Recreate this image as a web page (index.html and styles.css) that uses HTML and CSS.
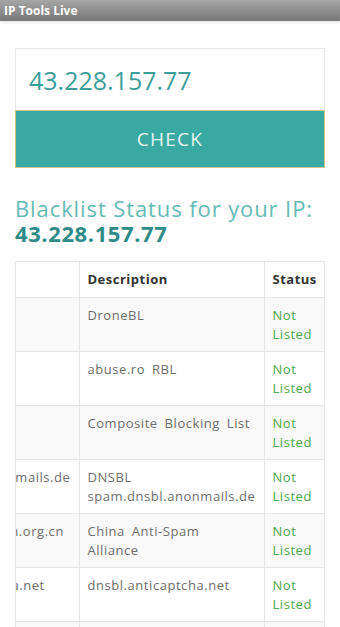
FILE: index.html
```html
<!DOCTYPE html>
<html lang="en">

<head>
  <meta charset="UTF-8" />
  <meta name="viewport" content="width=device-width, initial-scale=1.0" />
  <title>IP Tools Live</title>
  <link rel="stylesheet" href="styles.css">
</head>

<body>

  <div class="titlebar">IP Tools Live</div>

  <div class="page">
    <!-- IP check form -->
    <form class="check-form" onsubmit="return false">
      <input type="text" class="ip-input" value="43.228.157.77" />
      <button class="check-btn">CHECK</button>
    </form>

    <h2 class="result-title">Blacklist Status for your IP:<br><strong>43.228.157.77</strong></h2>

    <!-- Results table, scrolled to the right like on the phone -->
    <div class="table-wrap">
      <table class="bl-table">
        <colgroup>
          <col class="col-host">
          <col class="col-desc">
          <col class="col-status">
        </colgroup>
        <thead>
          <tr>
            <th>Blacklist</th>
            <th>Description</th>
            <th>Status</th>
          </tr>
        </thead>
        <tbody>
          <tr>
            <td class="host">dronebl.org</td>
            <td>DroneBL</td>
            <td class="ok">Not Listed</td>
          </tr>
          <tr>
            <td class="host">rbl.abuse.ro</td>
            <td>abuse.ro RBL</td>
            <td class="ok">Not Listed</td>
          </tr>
          <tr>
            <td class="host">cbl.abuseat.org</td>
            <td>Composite Blocking List</td>
            <td class="ok">Not Listed</td>
          </tr>
          <tr>
            <td class="host">spam.dnsbl.anonmails.de</td>
            <td>DNSBL spam.dnsbl.anonmails.de</td>
            <td class="ok">Not Listed</td>
          </tr>
          <tr>
            <td class="host">cblplus.anti-spam.org.cn</td>
            <td>China Anti-Spam Alliance</td>
            <td class="ok">Not Listed</td>
          </tr>
          <tr>
            <td class="host">dnsbl.anticaptcha.net</td>
            <td>dnsbl.anticaptcha.net</td>
            <td class="ok">Not Listed</td>
          </tr>
          <tr>
            <td class="host">bl.spamcop.net</td>
            <td>SpamCop Blocking List</td>
            <td class="ok">Not Listed</td>
          </tr>
        </tbody>
      </table>
    </div>
  </div>

</body>

</html>
```

FILE: styles.css
```css
body {
  margin: 0;
  background: #ffffff;
  font-family: 'Open Sans', sans-serif;
}

.titlebar {
  height: 21px;
  line-height: 21px;
  padding-left: 4px;
  background: linear-gradient(#a6a6a6, #787878);
  color: #ffffff;
  font-size: 12px;
  font-weight: bold;
  box-shadow: 0 1px 3px rgba(0, 0, 0, 0.15);
}

.page {
  padding: 27px 15px 0;
}

.check-form {
  margin: 0;
}

.ip-input {
  display: block;
  width: 100%;
  height: 62px;
  box-sizing: border-box;
  padding: 0 13px;
  border: 1px solid #e8e8e8;
  border-bottom: none;
  font-family: 'Open Sans', sans-serif;
  font-size: 25px;
  color: #3d9d99;
  outline: none;
}

.check-btn {
  display: block;
  width: 100%;
  height: 58px;
  margin: 0;
  background-color: #3aa9a4;
  border: 1px solid #d2c58c;
  color: #e4f4f3;
  font-family: 'Open Sans', sans-serif;
  font-size: 19px;
  letter-spacing: 1.3px;
  cursor: pointer;
}

.result-title {
  margin: 28px 0 15px;
  font-size: 22px;
  line-height: 25px;
  font-weight: normal;
  letter-spacing: 0.9px;
  color: #66bab5;
}

.result-title strong {
  color: #2e8b87;
  font-weight: bold;
  letter-spacing: 0.6px;
}

.table-wrap {
  overflow: hidden;
  direction: rtl;
  border: 1px solid #e6e6e6;
  border-bottom: none;
}

.bl-table {
  direction: ltr;
  table-layout: fixed;
  width: 430px;
  border-collapse: collapse;
  font-size: 13px;
  line-height: 19px;
  letter-spacing: 0.55px;
  color: #6e6e6e;
}

.col-host {
  width: 185px;
}

.col-desc {
  width: 185px;
}

.col-status {
  width: 60px;
}

.bl-table th,
.bl-table td {
  padding: 8px 8px 7px;
  border: 1px solid #e6e6e6;
  text-align: left;
  vertical-align: top;
}

.bl-table td {
  word-spacing: 3px;
}

.bl-table th {
  padding-bottom: 8px;
  border-top: none;
  color: #333333;
  font-weight: bold;
  letter-spacing: 0.5px;
}

.bl-table tr > :last-child {
  border-right: none;
}

.bl-table tbody tr:nth-of-type(odd) {
  background-color: #f9f9f9;
}

.host {
  white-space: nowrap;
  overflow: hidden;
}

.ok {
  color: #4fa84f;
}
```
